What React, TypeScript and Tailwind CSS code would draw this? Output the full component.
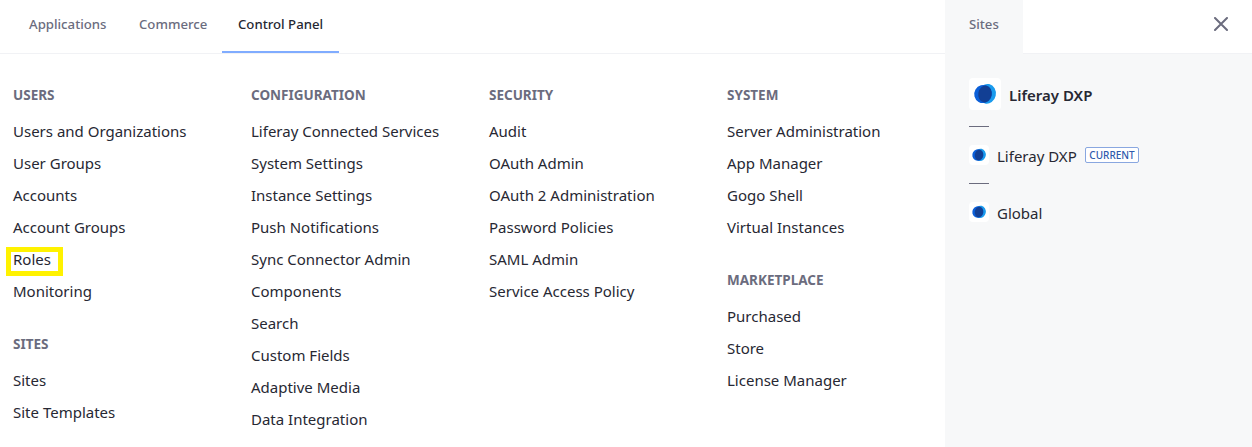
type Item = { label: string; marked?: boolean };
type Group = { title: string; items: Item[] };

const columns: Group[][] = [
  [
    {
      title: "USERS",
      items: [
        { label: "Users and Organizations" },
        { label: "User Groups" },
        { label: "Accounts" },
        { label: "Account Groups" },
        { label: "Roles", marked: true },
        { label: "Monitoring" },
      ],
    },
    { title: "SITES", items: [{ label: "Sites" }, { label: "Site Templates" }] },
  ],
  [
    {
      title: "CONFIGURATION",
      items: [
        { label: "Liferay Connected Services" },
        { label: "System Settings" },
        { label: "Instance Settings" },
        { label: "Push Notifications" },
        { label: "Sync Connector Admin" },
        { label: "Components" },
        { label: "Search" },
        { label: "Custom Fields" },
        { label: "Adaptive Media" },
        { label: "Data Integration" },
      ],
    },
  ],
  [
    {
      title: "SECURITY",
      items: [
        { label: "Audit" },
        { label: "OAuth Admin" },
        { label: "OAuth 2 Administration" },
        { label: "Password Policies" },
        { label: "SAML Admin" },
        { label: "Service Access Policy" },
      ],
    },
  ],
  [
    {
      title: "SYSTEM",
      items: [
        { label: "Server Administration" },
        { label: "App Manager" },
        { label: "Gogo Shell" },
        { label: "Virtual Instances" },
      ],
    },
    {
      title: "MARKETPLACE",
      items: [{ label: "Purchased" }, { label: "Store" }, { label: "License Manager" }],
    },
  ],
];

function Logo({ className }: { className: string }) {
  return (
    <svg viewBox="0 0 32 32" className={className} aria-hidden="true">
      <ellipse cx="18.1" cy="15.8" rx="8.8" ry="9.9" transform="rotate(12 18.1 15.8)" fill="#1a9bed" />
      <ellipse cx="14.1" cy="16" rx="8.8" ry="9.1" transform="rotate(30 14.1 16)" fill="#0b5fd8" />
      <ellipse cx="16" cy="16" rx="6.7" ry="8.5" transform="rotate(10 16 16)" fill="#123f94" />
    </svg>
  );
}

function MenuGroup({ group }: { group: Group }) {
  return (
    <section>
      <h2 className="mb-1 h-8 text-[13.5px] leading-8 font-bold text-[#6b6c7e]">{group.title}</h2>
      <ul>
        {group.items.map((item) => (
          <li key={item.label} className="h-8 leading-8">
            <a className="relative whitespace-nowrap">
              {item.label}
              {item.marked && (
                <span className="absolute -top-[2px] -left-[7px] h-[29px] w-[57px] border-5 border-[#fff200]" />
              )}
            </a>
          </li>
        ))}
      </ul>
    </section>
  );
}

export default function App() {
  return (
    <div className="flex h-[447px] w-[1252px] overflow-hidden bg-white font-['Noto_Sans','Open_Sans',sans-serif] text-[15px] text-[#272833]">
      <main className="w-[945px] shrink-0">
        <nav className="flex h-[54px] border-b border-[#f1f2f5] pl-[13px] text-[13.2px] font-medium text-[#6b6c7e]">
          <a className="flex h-[53px] w-[110px] items-center pb-[3px] pl-4">Applications</a>
          <a className="flex h-[53px] w-[99px] items-center pb-[3px] pl-4">Commerce</a>
          <a className="flex h-[53px] w-[117px] items-center border-b-2 border-[#80acff] pb-px pl-4 text-[#272833]">
            Control Panel
          </a>
        </nav>
        <div className="flex pt-[25px] pl-[13px]">
          {columns.map((groups) => (
            <div key={groups[0].title} className="flex w-[238px] shrink-0 flex-col gap-[21px]">
              {groups.map((group) => (
                <MenuGroup key={group.title} group={group} />
              ))}
            </div>
          ))}
        </div>
      </main>

      <aside className="flex-1 bg-[#f7f8f9]">
        <div className="flex h-[54px]">
          <div className="flex h-[53px] w-[78px] items-center pb-[3px] pl-6 text-[13.2px] font-medium text-[#6b6c7e]">
            Sites
          </div>
          <div className="flex flex-1 items-start justify-end border-b border-[#f1f2f5] bg-white pt-[17px] pr-6">
            <svg viewBox="0 0 14 14" className="h-[14px] w-[14px]" aria-label="Close">
              <path d="M1 1L13 13M13 1L1 13" stroke="#6b6c7e" strokeWidth="2" strokeLinecap="round" />
            </svg>
          </div>
        </div>
        <div className="flex flex-col pt-6 pl-6">
          <div className="flex h-8 items-center">
            <span className="h-8 w-8 rounded bg-white">
              <Logo className="h-8 w-8" />
            </span>
            <span className="mt-[3px] ml-2 font-semibold">Liferay DXP</span>
          </div>
          <hr className="mt-4 w-5 border-[#6b6c7e]" />
          <div className="mt-[18px] flex h-5 items-start">
            <span className="h-5 w-5 rounded bg-white">
              <Logo className="h-5 w-5" />
            </span>
            <span className="ml-2 leading-[22px]">Liferay DXP</span>
            <span className="mt-[2px] ml-auto mr-[113px] flex h-4 w-[54px] items-center justify-center rounded-[2px] border border-[#89a7e0] bg-white text-[10px] font-medium text-[#2e5aac]">
              CURRENT
            </span>
          </div>
          <hr className="mt-[18px] w-5 border-[#6b6c7e]" />
          <div className="mt-[18px] flex h-5 items-start">
            <span className="h-5 w-5 rounded bg-white">
              <Logo className="h-5 w-5" />
            </span>
            <span className="ml-2 leading-[22px]">Global</span>
          </div>
        </div>
      </aside>
    </div>
  );
}
